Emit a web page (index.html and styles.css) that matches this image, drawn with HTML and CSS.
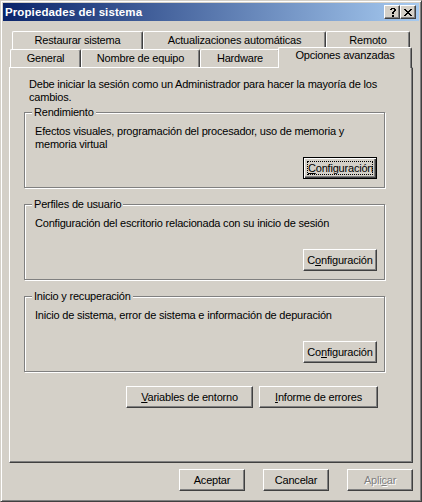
FILE: index.html
```html
<!DOCTYPE html>
<html>
<head>
    <meta charset="utf-8">
    <link rel="stylesheet" href="styles.css">

    <title>Propiedades del sistema</title>
</head>
<body>
    <div class="window">
        <div class="titlebar">
            <span class="title">Propiedades del sistema</span>
            <div class="caption-buttons">
                <button class="caption-btn" type="button" title="Ayuda">
                    <svg width="7" height="9" viewBox="0 0 7 9" shape-rendering="crispEdges"><path fill="#000" d="M2 0h4v1H2z M1 1h2v1H1z M5 1h2v1H5z M5 2h2v1H5z M4 3h2v1H4z M3 4h2v2H3z M3 7h2v2H3z"/></svg>
                </button>
                <button class="caption-btn" type="button" title="Cerrar">
                    <svg width="8" height="7" viewBox="0 0 8 7" shape-rendering="crispEdges"><path fill="#000" d="M0 0h2v1H0z M6 0h2v1H6z M1 1h2v1H1z M5 1h2v1H5z M2 2h4v1H2z M3 3h2v1H3z M2 4h4v1H2z M1 5h2v1H1z M5 5h2v1H5z M0 6h2v1H0z M6 6h2v1H6z"/></svg>
                </button>
            </div>
        </div>

        <div class="dialog-body">
            <div class="tabs">
                <div class="tab-row tab-row-back">
                    <div class="tab">Restaurar sistema</div>
                    <div class="tab">Actualizaciones automáticas</div>
                    <div class="tab">Remoto</div>
                </div>
                <div class="tab-row tab-row-front">
                    <div class="tab">General</div>
                    <div class="tab">Nombre de equipo</div>
                    <div class="tab">Hardware</div>
                    <div class="tab tab-selected">Opciones avanzadas</div>
                </div>
            </div>

            <div class="panel">
                <p class="intro">Debe iniciar la sesión como un Administrador para hacer la mayoría de los<br>cambios.</p>

                <fieldset class="group">
                    <legend>Rendimiento</legend>
                    <div class="group-body">
                        <p class="group-text">Efectos visuales, programación del procesador, uso de memoria y<br>memoria virtual</p>
                        <button class="btn btn-config btn-default" type="button"><span class="focus-ring"><u>C</u>onfiguración</span></button>
                    </div>
                </fieldset>

                <fieldset class="group">
                    <legend>Perfiles de usuario</legend>
                    <div class="group-body">
                        <p class="group-text">Configuración del escritorio relacionada con su inicio de sesión</p>
                        <button class="btn btn-config" type="button">C<u>o</u>nfiguración</button>
                    </div>
                </fieldset>

                <fieldset class="group">
                    <legend>Inicio y recuperación</legend>
                    <div class="group-body">
                        <p class="group-text">Inicio de sistema, error de sistema e información de depuración</p>
                        <button class="btn btn-config" type="button">Co<u>n</u>figuración</button>
                    </div>
                </fieldset>

                <div class="extra-buttons">
                    <button class="btn btn-env" type="button"><u>V</u>ariables de entorno</button>
                    <button class="btn btn-errors" type="button"><u>I</u>nforme de errores</button>
                </div>
            </div>

            <div class="dialog-buttons">
                <button class="btn btn-dialog" type="button">Aceptar</button>
                <button class="btn btn-dialog" type="button">Cancelar</button>
                <button class="btn btn-dialog" type="button" disabled>Apli<u>c</u>ar</button>
            </div>
        </div>
    </div>
</body>
</html>
```

FILE: styles.css
```css
body {
    margin: 0;
    font-family: "Liberation Sans", Arial, sans-serif;
    font-size: 11px;
    letter-spacing: -0.2px;
    color: #000;
    background: #D4D0C8;
}

.window {
    width: 422px;
    height: 502px;
    box-sizing: border-box;
    display: flex;
    flex-direction: column;
    padding: 2px;
    background: #D4D0C8;
    border: 1px solid;
    border-color: #D4D0C8 #404040 #404040 #D4D0C8;
    box-shadow: inset 1px 1px #FFF, inset -1px -1px #808080;
}

/* title bar */
.titlebar {
    height: 18px;
    display: flex;
    align-items: center;
    padding: 0 3px 0 2px;
    background: linear-gradient(to right, #0A246A, #A6CAF0);
}

.title {
    flex: 1;
    color: #FFF;
    font-weight: bold;
    font-size: 11.5px;
    letter-spacing: 0.1px;
    line-height: 18px;
}

.caption-buttons {
    display: flex;
}

.caption-btn {
    width: 16px;
    height: 14px;
    padding: 0;
    display: flex;
    align-items: center;
    justify-content: center;
    background: #D4D0C8;
    border: 1px solid;
    border-color: #FFF #404040 #404040 #FFF;
    box-shadow: inset -1px -1px #808080;
}

/* tabs */
.dialog-body {
    flex: 1;
    display: flex;
    flex-direction: column;
    padding: 10px 6px 0 6px;
}

.tab-row {
    display: grid;
    grid-auto-rows: 18px;
}

.tab-row-back {
    grid-template-columns: 131px 183px 84px;
    margin-left: 3px;
}

.tab-row-front {
    grid-template-columns: 71px 119px 80px 130px;
    margin-left: 1px;
}

.tab {
    box-sizing: border-box;
    border-top: 1px solid #FFF;
    border-left: 1px solid #FFF;
    border-right: 1px solid #404040;
    border-radius: 2px 2px 0 0;
    box-shadow: inset -1px 0 #808080;
    text-align: center;
    line-height: 17px;
    white-space: nowrap;
}

.tab-selected {
    position: relative;
    z-index: 1;
    margin: -2px -2px -1px -2px;
    background: #D4D0C8;
    line-height: 14px;
}

/* tab page */
.panel {
    height: 396px;
    box-sizing: border-box;
    padding: 10px 0 0 14px;
    border: 1px solid;
    border-color: #FFF #404040 #404040 #FFF;
    box-shadow: inset -1px -1px #808080;
}

.intro {
    margin: 0;
    padding-left: 5px;
    line-height: 13px;
    white-space: nowrap;
}

.group {
    width: 361px;
    box-sizing: border-box;
    min-width: 0;
    margin: 10px 0 0 0;
    padding: 6px 7px 8px 10px;
    border: 1px solid #808080;
    box-shadow: 1px 1px 0 #FFF, inset 1px 1px 0 #FFF;
}

.group:first-of-type {
    margin-top: 2px;
}

.group legend {
    margin-left: -3px;
    padding: 0 2px;
    line-height: 13px;
    background: #D4D0C8;
}

.group-body {
    height: 54px;
    display: flex;
    flex-direction: column;
}

.group-text {
    margin: 0;
    line-height: 13px;
    white-space: nowrap;
}

/* buttons */
.btn {
    height: 22px;
    box-sizing: border-box;
    padding: 0;
    font: inherit;
    letter-spacing: inherit;
    color: #000;
    line-height: 20px;
    background: #D4D0C8;
    border: 1px solid;
    border-color: #FFF #404040 #404040 #FFF;
    box-shadow: inset -1px -1px #808080;
    white-space: nowrap;
}

.btn-config {
    width: 74px;
    margin-top: auto;
    align-self: flex-end;
}

.btn-default {
    padding: 3px;
    border-color: #000;
    box-shadow: inset 1px 1px #FFF, inset -1px -1px #404040, inset -2px -2px #808080;
}

.focus-ring {
    display: block;
    height: 14px;
    box-sizing: border-box;
    border: 1px dotted #000;
    line-height: 12px;
}

.extra-buttons {
    width: 361px;
    box-sizing: border-box;
    display: flex;
    justify-content: flex-end;
    gap: 6px;
    margin-top: 14px;
    padding-right: 7px;
}

.btn-env {
    width: 127px;
}

.btn-errors {
    width: 119px;
}

.dialog-buttons {
    display: flex;
    justify-content: flex-end;
    gap: 18px;
    margin-top: 6px;
}

.btn-dialog {
    width: 66px;
}

.btn-dialog:disabled {
    color: #808080;
    text-shadow: 1px 1px 0 #FFF;
}
```
